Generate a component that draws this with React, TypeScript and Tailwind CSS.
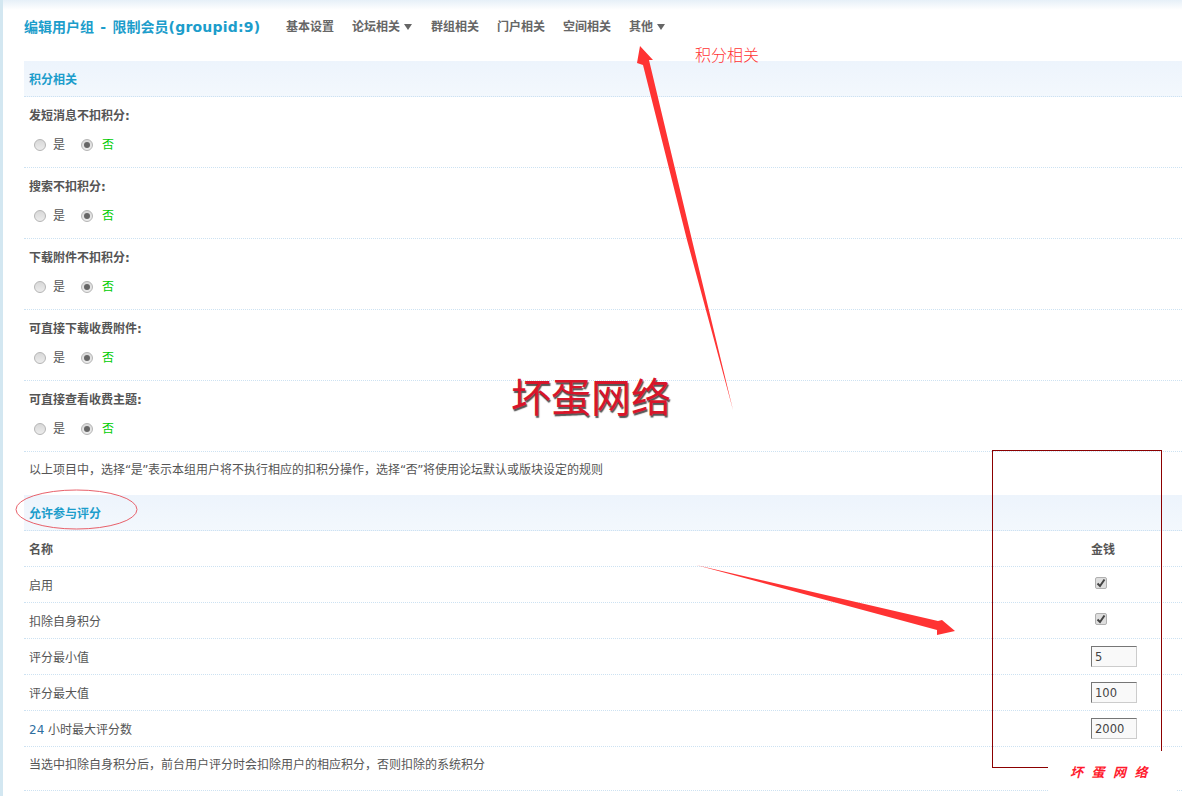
const CJK = "font-['DejaVu_Sans','Noto_Sans_CJK_SC',sans-serif]";

const NAV = [
  { label: "基本设置" },
  { label: "论坛相关", menu: true },
  { label: "群组相关" },
  { label: "门户相关" },
  { label: "空间相关" },
  { label: "其他", menu: true },
];

const PERMS = ["发短消息不扣积分:", "搜索不扣积分:", "下载附件不扣积分:", "可直接下载收费附件:", "可直接查看收费主题:"];

function Radio({ checked }: { checked?: boolean }) {
  return (
    <span className="flex h-3 w-3 items-center justify-center rounded-full border border-[#b5b5b5] bg-gradient-to-b from-[#d8d8d8] to-[#ececec]">
      {checked && <span className="h-1.5 w-1.5 rounded-full bg-[#666]" />}
    </span>
  );
}

function Checked() {
  return (
    <span className="mb-[3px] ml-1 flex h-3 w-3 items-center justify-center rounded-[2px] border border-[#b0b0b0] bg-[#dedede]">
      <svg viewBox="0 0 10 10" className="h-2.5 w-2.5">
        <path d="M1.5 5.5 L4 8 L8.5 1.5" fill="none" stroke="#444" strokeWidth="2" />
      </svg>
    </span>
  );
}

function Band({ title }: { title: string }) {
  return (
    <div className="flex h-9 items-center border-b border-dotted border-[#cde2f2] bg-gradient-to-b from-[#edf4fc] to-[#f3f8fd] pl-[5px] pt-[2px] text-xs font-bold text-[#1c9dcb]">
      {title}
    </div>
  );
}

function PermRow({ label }: { label: string }) {
  return (
    <div className="h-[71px] border-b border-dotted border-[#cde2f2] pl-[5px]">
      <div className="flex h-[37px] items-center text-xs font-bold text-[#555]">{label}</div>
      <div className="flex h-[22px] items-center text-xs text-[#555]">
        <span className="ml-[5px]"><Radio /></span>
        <span className="ml-[7px]">是</span>
        <span className="ml-[16px]"><Radio checked /></span>
        <span className="ml-[9px] text-[#00cc00]">否</span>
      </div>
    </div>
  );
}

function TableRow({ name, children, bold }: { name: React.ReactNode; children: React.ReactNode; bold?: boolean }) {
  return (
    <div className={`flex h-9 items-center border-b border-dotted border-[#cde2f2] text-xs text-[#555] ${bold ? "font-bold" : ""}`}>
      <div className="flex-1 pl-[5px] pt-[2px]">{name}</div>
      <div className={`flex w-[96px] items-center pl-[5px] ${bold ? "pt-[2px]" : ""}`}>{children}</div>
    </div>
  );
}

function ValueInput({ value }: { value: string }) {
  return (
    <input
      readOnly
      defaultValue={value}
      className="h-[21px] w-[46px] border border-[#ccc] border-l-[#767676] border-t-[#767676] bg-[#f9f9f9] pl-[3px] text-[11.5px] text-[#444] outline-none"
    />
  );
}

function Annotations() {
  return (
    <>
      <svg className="absolute inset-0 h-full w-full" viewBox="0 0 1182 796">
        <polygon points="640,46 653,60 649,60 692,240 733,410 687,240 643,65 637,63" fill="#ff3333" />
        <polygon points="696,565 938,621 942,620 955,631 937,635 937,630" fill="#ff3333" />
        <ellipse cx="76.5" cy="509.5" rx="60.5" ry="19.5" fill="none" stroke="#e8606a" strokeWidth="1" />
      </svg>
      <div className="absolute left-[695px] top-[44px] text-base font-light text-[#ff3333]">积分相关</div>
      <div className="absolute left-[511px] top-[369px] text-[40px] font-normal leading-[58px] text-[#d8152a] [text-shadow:1px_2px_1px_#555]">
        坏蛋网络
      </div>
      <div className="absolute left-[992px] top-[450px] h-[318px] w-[170px] border border-[#8b0000]" />
      <div className="absolute left-[1048px] top-[751px] h-[45px] w-[128px] bg-white pl-[22px] pt-[12px] text-[13px] font-bold italic text-[#ff1a2e] [word-spacing:4px]">
        坏 蛋 网 络
      </div>
    </>
  );
}

export default function App() {
  return (
    <div className={`relative h-[796px] w-[1182px] overflow-hidden border-l-[3px] border-[#d3e7f1] bg-white ${CJK}`}>
      <div className="h-2.5 bg-gradient-to-b from-[#e6f0f8] to-white" />
      <div className="pl-[21px]">
        <div className="flex h-[34px] items-center">
          <h1 className="w-[262px] text-sm font-bold text-[#1c9dcb] [word-spacing:1.5px]">
            编辑用户组 - 限制会员<span className="tracking-[0.2px]">(groupid:9)</span>
          </h1>
          <nav className="flex gap-[18px] text-xs font-bold text-[#666]">
            {NAV.map((item) => (
              <span key={item.label} className="flex items-center gap-[4px]">
                {item.label}
                {item.menu && (
                  <svg viewBox="0 0 8 6" className="mr-px h-1.5 w-2">
                    <polygon points="0,0 8,0 4,6" fill="#666" />
                  </svg>
                )}
              </span>
            ))}
          </nav>
        </div>
        <div className="h-[17px]" />
        <Band title="积分相关" />
        {PERMS.map((p) => (
          <PermRow key={p} label={p} />
        ))}
        <div className="h-[43px] pl-[5px] pt-[10px] text-xs text-[#555]">
          以上项目中，选择<span className="tracking-[-0.5px]">“是”</span>表示本组用户将不执行相应的扣积分操作，选择<span className="tracking-[-0.5px]">“否”</span>将使用论坛默认或版块设定的规则
        </div>
        <Band title="允许参与评分" />
        <TableRow name="名称" bold>金钱</TableRow>
        <TableRow name="启用"><Checked /></TableRow>
        <TableRow name="扣除自身积分"><Checked /></TableRow>
        <TableRow name="评分最小值"><ValueInput value="5" /></TableRow>
        <TableRow name="评分最大值"><ValueInput value="100" /></TableRow>
        <TableRow name={<><span className="text-[#2f6f9f]">24</span> 小时最大评分数</>}><ValueInput value="2000" /></TableRow>
        <div className="flex h-11 items-center border-b border-dotted border-[#cde2f2] pb-2 pl-[5px] text-xs text-[#555]">
          当选中扣除自身积分后，前台用户评分时会扣除用户的相应积分，否则扣除的系统积分
        </div>
      </div>
      <div className="absolute -left-[3px] top-0 h-full w-[1182px]">
        <Annotations />
      </div>
    </div>
  );
}
